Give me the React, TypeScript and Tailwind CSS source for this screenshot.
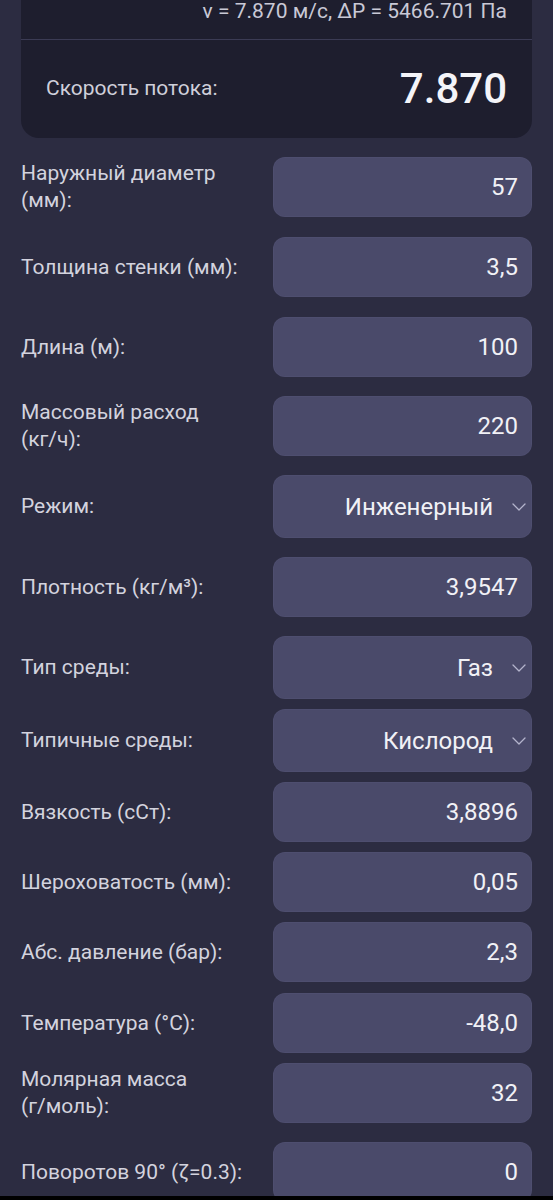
type Field = {
  label: string
  value: string
  select?: boolean
  mt: string
}

const fields: Field[] = [
  { label: 'Наружный диаметр (мм):', value: '57', mt: 'mt-[19px]' },
  { label: 'Толщина стенки (мм):', value: '3,5', mt: 'mt-[20px]' },
  { label: 'Длина (м):', value: '100', mt: 'mt-[20px]' },
  { label: 'Массовый расход (кг/\u2060ч):', value: '220', mt: 'mt-[19px]' },
  { label: 'Режим:', value: 'Инженерный', select: true, mt: 'mt-[19px]' },
  { label: 'Плотность (кг/\u2060м³):', value: '3,9547', mt: 'mt-[19px]' },
  { label: 'Тип среды:', value: 'Газ', select: true, mt: 'mt-[19px]' },
  { label: 'Типичные среды:', value: 'Кислород', select: true, mt: 'mt-[10px]' },
  { label: 'Вязкость (сСт):', value: '3,8896', mt: 'mt-[10px]' },
  { label: 'Шероховатость (мм):', value: '0,05', mt: 'mt-[10px]' },
  { label: 'Абс. давление (бар):', value: '2,3', mt: 'mt-[10px]' },
  { label: 'Температура (°C):', value: '-48,0', mt: 'mt-[11px]' },
  { label: 'Молярная масса (г/\u2060моль):', value: '32', mt: 'mt-[10px]' },
  { label: 'Поворотов 90° (ζ=0.3):', value: '0', mt: 'mt-[19px]' },
]

function Chevron() {
  return (
    <svg width="14" height="8" viewBox="0 0 14 8" fill="none" className="ml-[19px]">
      <polyline points="1,1 7,7 13,1" stroke="#b4b4cc" strokeWidth="1.3" strokeLinecap="round" strokeLinejoin="round" />
    </svg>
  )
}

function FieldRow({ field }: { field: Field }) {
  return (
    <div className={`flex items-center gap-3 ${field.mt}`}>
      <div className="flex-1 text-[21px] leading-[27px] text-[#d3d3de]">{field.label}</div>
      {field.select ? (
        <div className="w-[259px] h-[63px] shrink-0 rounded-[12px] bg-[#4a4a6a] border border-[#52527380] flex items-center justify-end pr-[5px]">
          <span className="text-[24px] text-[#f1f1f6]">{field.value}</span>
          <Chevron />
        </div>
      ) : (
        <div className="w-[259px] h-[60px] shrink-0 rounded-[12px] bg-[#4a4a6a] border border-[#52527380] flex items-center justify-end pr-[13px]">
          <span className="text-[24px] text-[#f1f1f6]">{field.value}</span>
        </div>
      )}
    </div>
  )
}

export default function App() {
  return (
    <div
      className="h-[1200px] flex flex-col overflow-hidden bg-[#2c2c41]"
      style={{ fontFamily: 'Roboto, "Noto Sans", sans-serif' }}
    >
      <div className="flex-1 overflow-hidden px-[21px]">
        <div className="rounded-b-[18px] bg-[#1e1e2e]">
          <div className="h-[40px] flex justify-end px-[25px] border-b border-[#3b3b54]">
            <span className="text-[21px] leading-[22px] text-[#c9c9d6]">
              v = 7.870 м/с, ΔP = 5466.701 Па
            </span>
          </div>
          <div className="h-[98px] flex items-center justify-between px-[25px]">
            <span className="text-[21px] text-[#cfcfda]">Скорость потока:</span>
            <span className="text-[42px] font-medium text-[#f4f4f8] leading-none">7.870</span>
          </div>
        </div>
        {fields.map((f) => (
          <FieldRow key={f.label} field={f} />
        ))}
      </div>
      <div className="h-[4px] bg-black" />
    </div>
  )
}
